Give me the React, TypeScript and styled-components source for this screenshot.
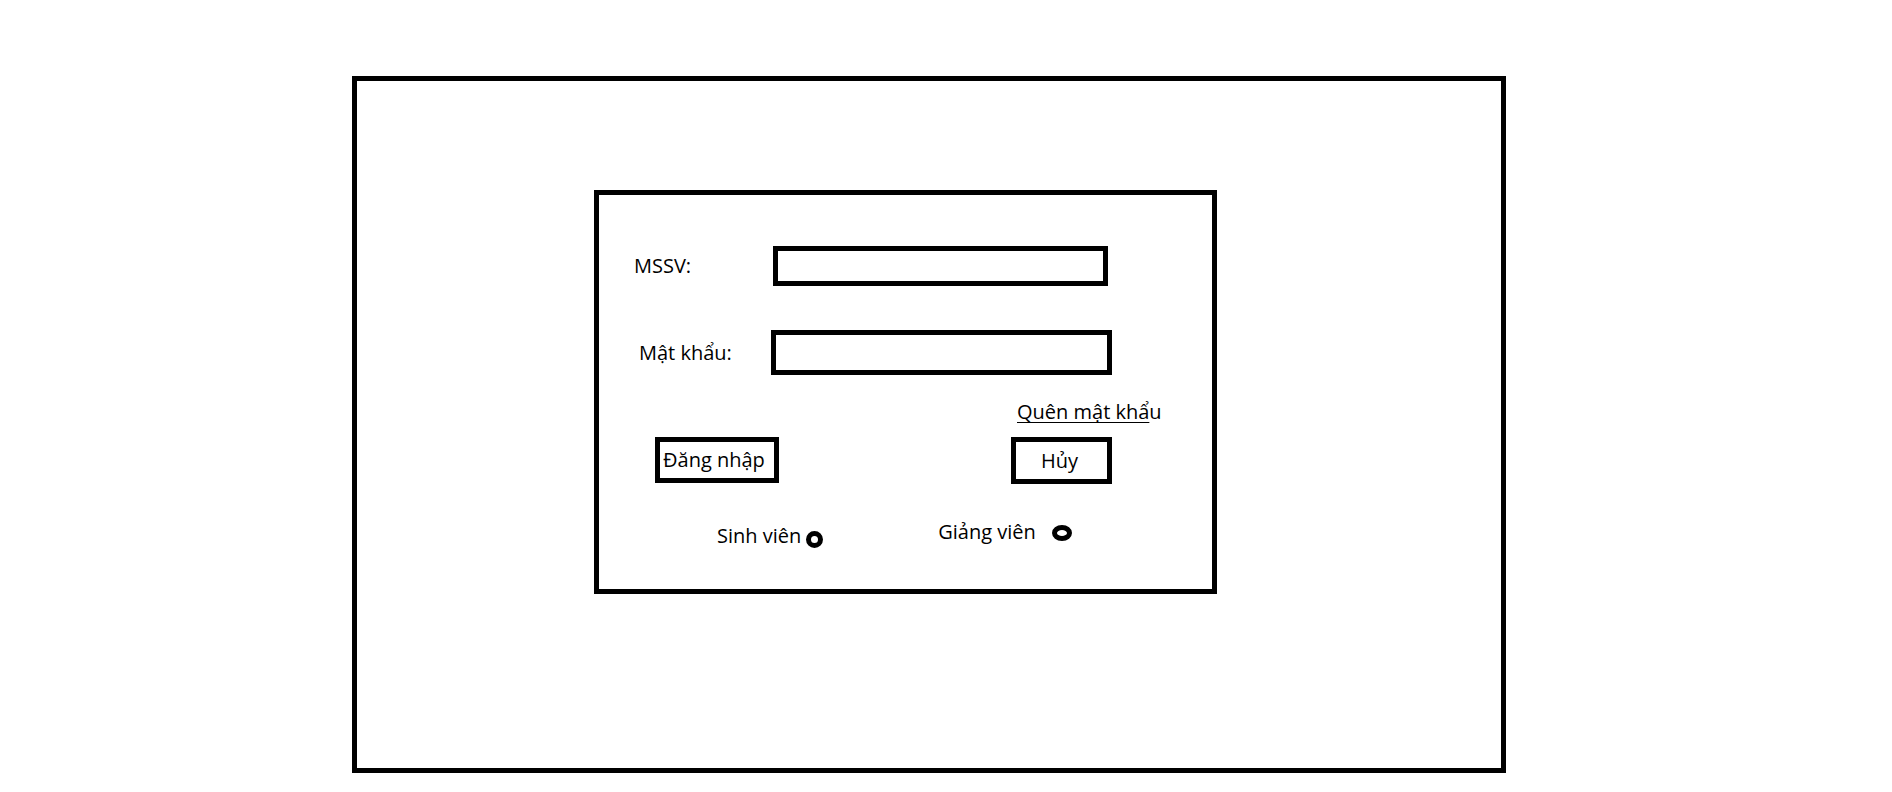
import React, { FC } from 'react';
import styled, { createGlobalStyle } from 'styled-components';

const GlobalStyle = createGlobalStyle`
  html, body {
    margin: 0;
    padding: 0;
    background: #fff;
  }

  body {
    font-family: 'Open Sans', 'Noto Sans', sans-serif;
    color: #000;
  }
`;

const Page = styled.div`
  box-sizing: border-box;
  width: 1892px;
  height: 792px;
  padding: 76px 0 0 352px;
  background: #fff;
`;

const Frame = styled.div`
  box-sizing: border-box;
  width: 1154px;
  height: 697px;
  padding: 109px 0 0 237px;
  border: 5px solid #000;
`;

const Card = styled.form`
  box-sizing: border-box;
  display: flex;
  flex-direction: column;
  width: 623px;
  height: 404px;
  padding-top: 51px;
  border: 5px solid #000;

  font-size: 20px;
  line-height: 28px;
`;

const FieldRow = styled.div<{ $top: number; $indent: number }>`
  display: flex;
  align-items: center;
  margin-top: ${(p) => p.$top}px;
  padding-left: ${(p) => p.$indent}px;
`;

const Label = styled.label<{ $width: number }>`
  flex: none;
  width: ${(p) => p.$width}px;
`;

const Field = styled.input<{ $width: number; $height: number }>`
  box-sizing: border-box;
  flex: none;
  width: ${(p) => p.$width}px;
  height: ${(p) => p.$height}px;
  margin: 0;
  padding: 0 8px;
  border: 5px solid #000;
  border-radius: 0;
  outline: none;
  background: #fff;

  font: inherit;
`;

const ForgotRow = styled.div`
  margin-top: 23px;
  padding-left: 418px;
`;

const ForgotLink = styled.a`
  color: #000;
  text-decoration: none;
  cursor: pointer;

  & .line {
    text-decoration: underline;
    text-decoration-thickness: 1px;
    text-underline-offset: 3px;
  }
`;

const ButtonRow = styled.div`
  display: flex;
  align-items: flex-start;
  gap: 232px;
  margin-top: 11px;
  padding-left: 56px;
`;

const Button = styled.button<{ $width: number; $height: number; $pad: number }>`
  box-sizing: border-box;
  display: flex;
  align-items: center;
  width: ${(p) => p.$width}px;
  height: ${(p) => p.$height}px;
  margin: 0;
  padding: 0 0 0 ${(p) => p.$pad}px;
  border: 5px solid #000;
  border-radius: 0;
  background: #fff;

  color: #000;
  font: inherit;
  cursor: pointer;
`;

const RoleRow = styled.div`
  display: flex;
  align-items: flex-start;
  margin-top: 34px;
  padding-left: 118px;
`;

const Role = styled.label<{ $top: number; $left: number }>`
  display: flex;
  align-items: flex-start;
  margin-top: ${(p) => p.$top}px;
  margin-left: ${(p) => p.$left}px;
  cursor: pointer;
`;

const Radio = styled.span<{ $w: number; $h: number; $top: number; $gap: number }>`
  box-sizing: border-box;
  flex: none;
  width: ${(p) => p.$w}px;
  height: ${(p) => p.$h}px;
  margin-top: ${(p) => p.$top}px;
  margin-left: ${(p) => p.$gap}px;
  border: 5px solid #000;
  border-radius: 50%;
`;

const App: FC = () => {
  return (
    <>
      <GlobalStyle />
      <Page>
        <Frame>
          <Card onSubmit={(e) => e.preventDefault()}>
            {/* MSSV */}
            <FieldRow $top={0} $indent={35}>
              <Label $width={139} htmlFor="mssv">MSSV:</Label>
              <Field id="mssv" type="text" $width={335} $height={40} />
            </FieldRow>

            {/* password */}
            <FieldRow $top={44} $indent={40}>
              <Label $width={132} htmlFor="pw">Mật khẩu:</Label>
              <Field id="pw" type="password" $width={341} $height={45} />
            </FieldRow>

            <ForgotRow>
              <ForgotLink>
                <span className="line">Quên mật khẩ</span>u
              </ForgotLink>
            </ForgotRow>

            {/* actions */}
            <ButtonRow>
              <Button type="submit" $width={124} $height={46} $pad={3}>
                Đăng nhập
              </Button>
              <Button type="button" $width={101} $height={47} $pad={25}>
                Hủy
              </Button>
            </ButtonRow>

            {/* role picker */}
            <RoleRow>
              <Role $top={4} $left={0}>
                <span>Sinh viên</span>
                <Radio $w={17} $h={17} $top={9} $gap={5} />
              </Role>
              <Role $top={0} $left={115}>
                <span>Giảng viên</span>
                <Radio $w={20} $h={16} $top={7} $gap={16} />
              </Role>
            </RoleRow>
          </Card>
        </Frame>
      </Page>
    </>
  );
};

export default App;
